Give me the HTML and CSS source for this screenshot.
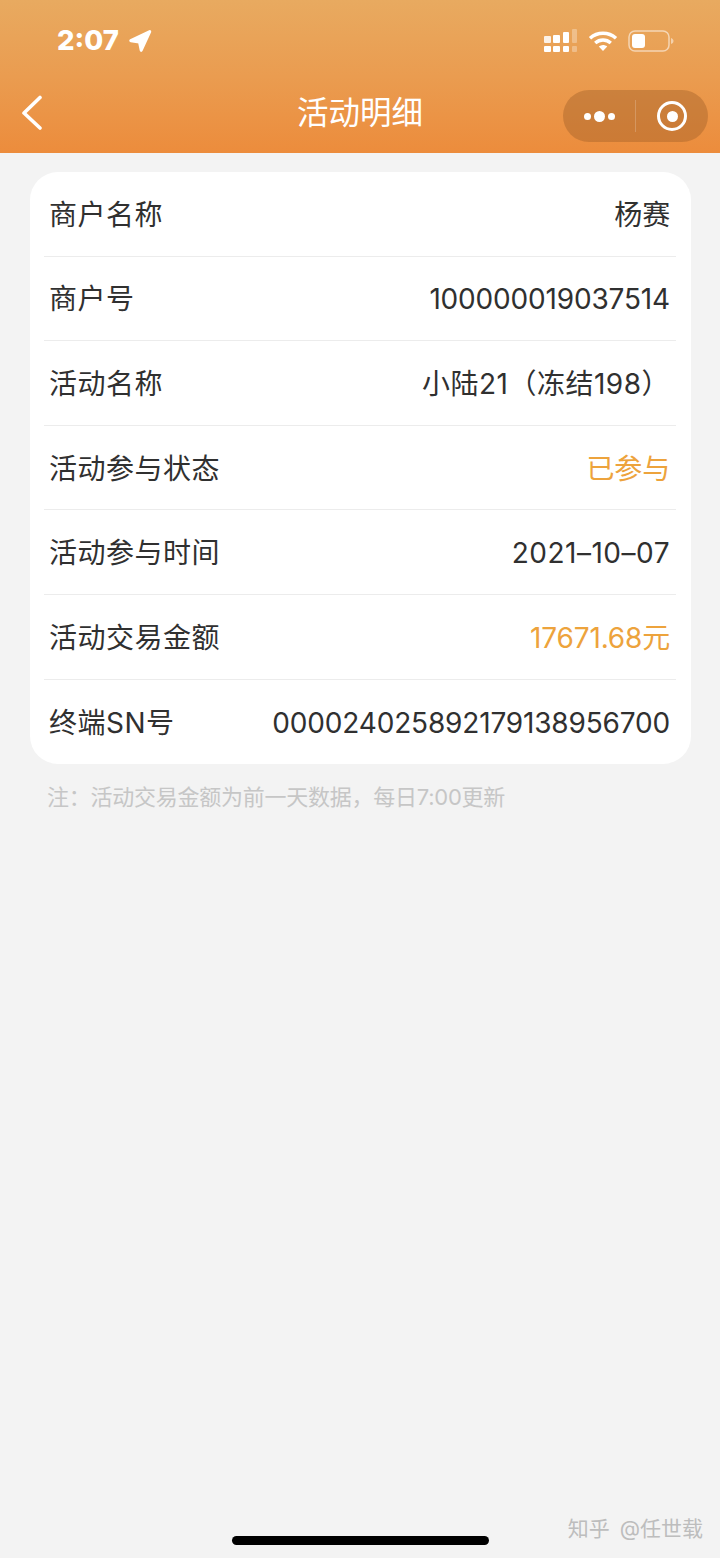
FILE: index.html
```html
<!DOCTYPE html>
<html lang="zh-CN">
<head>
<meta charset="utf-8">
<title>活动明细</title>
<link rel="stylesheet" href="styles.css">
</head>
<body>
<div class="page">
  <header class="header">
    <div class="status">
      <div class="status-left">
        <span class="time">2:07</span>
        <svg class="loc" width="24" height="24" viewBox="0 0 24 24"><path d="M2.500 11 21.500 2c.6-.3 1 .2.8.8L13.800 21.500c-.3.7-1.100.6-1.200-.1L11 13.500l-8.200-1.200c-.7-.1-.9-1-.3-1.300z" fill="#fff" stroke="#fff" stroke-width="1.800" stroke-linejoin="round"/></svg>
      </div>
      <div class="status-right">
        <svg class="signal" width="34" height="24" viewBox="0 0 34 24"><g fill="#fff"><rect x="0" y="7" width="7" height="7" rx="1" opacity=".85"/><rect x="0" y="17" width="7" height="6" rx="1"/><rect x="9" y="6" width="7" height="8" rx="1"/><rect x="9" y="17" width="7" height="6" rx="1"/><rect x="19" y="3" width="6" height="11" rx="1"/><rect x="19" y="17" width="6" height="6" rx="1"/><rect x="28" y="0" width="5" height="14" rx="1" opacity=".3"/><rect x="28" y="17" width="5" height="6" rx="1" opacity=".3"/></g></svg>
        <svg class="wifi" width="30" height="22" viewBox="0 0 30 22"><g fill="none" stroke="#fff" stroke-width="3.400"><path d="M2 8.200C9.400 1.500 20.600 1.500 28 8.200"/><path d="M7.200 13C11.800 9 18.200 9 22.800 13"/></g><path d="M10.800 16.400c2.600-2 5.800-2 8.400 0L15 21z" fill="#fff"/></svg>
        <svg class="battery" width="46" height="22" viewBox="0 0 46 22"><rect x="1" y="1" width="40" height="20" rx="6" fill="none" stroke="#fff" stroke-opacity=".55" stroke-width="1.500"/><rect x="4" y="4" width="13" height="14" rx="3" fill="#fff"/><path d="M43 8c1.500.5 2.500 1.500 2.500 3s-1 2.500-2.500 3z" fill="#fff" fill-opacity=".5"/></svg>
      </div>
    </div>
    <nav class="nav">
      <div class="nav-left">
        <svg class="back" width="24" height="36" viewBox="0 0 24 36"><path d="M20 2.500 4 18 20 33" fill="none" stroke="#fff" stroke-width="3.600" stroke-linecap="round" stroke-linejoin="round"/></svg>
      </div>
      <h1 class="title">活动明细</h1>
      <div class="capsule">
        <div class="cap-part cap-dots"><span class="dot"></span><span class="dot dot-big"></span><span class="dot"></span></div>
        <div class="cap-line"></div>
        <div class="cap-part cap-target"><span class="ring"><span class="ring-core"></span></span></div>
      </div>
    </nav>
  </header>
  <main class="main">
    <section class="card">
      <div class="row"><span class="label">商户名称</span><span class="value">杨赛</span></div>
      <div class="row"><span class="label">商户号</span><span class="value">100000019037514</span></div>
      <div class="row"><span class="label">活动名称</span><span class="value wide">小陆21（冻结198）</span></div>
      <div class="row"><span class="label">活动参与状态</span><span class="value accent">已参与</span></div>
      <div class="row"><span class="label">活动参与时间</span><span class="value wide">2021–10–07</span></div>
      <div class="row"><span class="label">活动交易金额</span><span class="value accent">17671.68元</span></div>
      <div class="row"><span class="label">终端SN号</span><span class="value">000024025892179138956700</span></div>
    </section>
    <p class="note">注：活动交易金额为前一天数据，每日7:00更新</p>
  </main>
  <div class="home"></div>
  <div class="watermark">知乎 @任世载</div>
</div>
</body>
</html>
```
FILE: styles.css
```css
* { box-sizing: border-box; }
html, body { margin: 0; padding: 0; }
body {
  font-family: Inter, "Noto Sans CJK SC", sans-serif;
  background: #f3f3f3;
}
.page {
  position: relative;
  width: 720px;
  height: 1558px;
  display: flex;
  flex-direction: column;
  overflow: hidden;
  background: #f3f3f3;
}
.header {
  height: 153px;
  flex: none;
  background: linear-gradient(180deg, #e8aa60 0%, #ea9c50 50%, #ec8c3c 100%);
  display: flex;
  flex-direction: column;
}
.status {
  height: 90px;
  padding: 24px 46px 0 57px;
  display: flex;
  justify-content: space-between;
  align-items: flex-start;
}
.status-left { display: flex; align-items: center; gap: 9px; height: 32px; }
.time {
  font-weight: 800;
  font-size: 27.500px;
  line-height: 32px;
  color: #fff;
}
.loc { margin-top: 1px; }
.status-right { display: flex; align-items: center; gap: 10px; height: 32px; margin-top: 1px; }
.nav {
  height: 52px;
  padding: 0 12px;
  display: grid;
  grid-template-columns: 145px 1fr 145px;
  align-items: center;
}
.nav-left { display: flex; align-items: center; padding-left: 8px; margin-top: -7px; }
.title {
  margin: -7px 0 0;
  font-weight: 400;
  font-size: 31.500px;
  line-height: 52px;
  text-align: center;
  color: #fff;
}
.capsule {
  width: 145px;
  height: 52px;
  border-radius: 26px;
  background: rgba(160, 95, 40, 0.42);
  display: flex;
  align-items: center;
}
.cap-part { flex: 1; display: flex; align-items: center; justify-content: center; gap: 3px; }
.cap-line { width: 1px; height: 32px; background: rgba(255, 255, 255, 0.2); }
.dot { width: 7px; height: 7px; border-radius: 50%; background: #fff; }
.dot-big { width: 11px; height: 11px; }
.ring {
  width: 30px;
  height: 30px;
  border: 3px solid #fff;
  border-radius: 50%;
  display: flex;
  align-items: center;
  justify-content: center;
}
.ring-core { width: 11px; height: 11px; border-radius: 50%; background: #fff; }
.main { padding: 19px 29px 0 30px; }
.card {
  background: #fff;
  border-radius: 28px;
  padding: 0 15px 0 14px;
}
.row {
  height: 84.600px;
  padding: 2px 6px 0 5px;
  display: flex;
  justify-content: space-between;
  align-items: center;
  border-bottom: 1px solid #ececec;
  font-size: 28px;
  color: #303030;
}
.row:last-child { border-bottom: 0; }
.label, .value { line-height: 40px; white-space: nowrap; }
.label { letter-spacing: 0.5px; }
.value { letter-spacing: -0.17px; }
.value.wide { letter-spacing: 0.5px; }
.accent { color: #eda33c; }
.note {
  margin: 19px 0 0 17px;
  font-size: 22px;
  line-height: 28px;
  letter-spacing: -0.25px;
  color: #c6c6c6;
}
.home {
  position: absolute;
  left: 232px;
  top: 1536px;
  width: 257px;
  height: 9px;
  border-radius: 5px;
  background: #000;
}
.watermark {
  position: absolute;
  right: 17px;
  top: 1515px;
  font-size: 21px;
  line-height: 28px;
  word-spacing: 4px;
  color: #bdbdbd;
}
```
